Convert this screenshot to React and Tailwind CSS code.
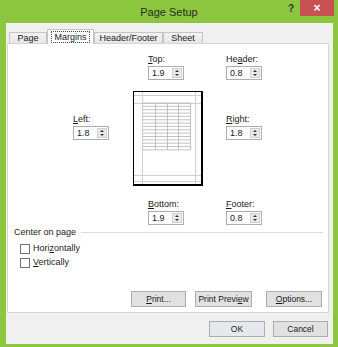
import { useState } from "react";

function Label({ text, ul }) {
  // ul = index of the access-key letter
  return (
    <div className="h-[11px] leading-[11px] whitespace-nowrap">
      {text.slice(0, ul)}
      <u>{text[ul]}</u>
      {text.slice(ul + 1)}
    </div>
  );
}

function SpinField({ label, ul, value, className = "" }) {
  return (
    <div className={"flex flex-col gap-[1px] w-[36px] " + className}>
      <Label text={label} ul={ul} />
      <div className="h-[14px] flex border border-[#abadb3] bg-white">
        <div className="flex-1 pl-[3px] leading-[12px]">{value}</div>
        <div className="w-[10px] m-[1px] bg-[#e9e9e9] border border-[#d0d0d0] flex items-center justify-center">
          <svg width="6" height="8" viewBox="0 0 6 8">
            <path d="M1 3 L3 1 L5 3 Z" fill="#333" />
            <path d="M1 5 L3 7 L5 5 Z" fill="#333" />
          </svg>
        </div>
      </div>
    </div>
  );
}

function PagePreview() {
  const rows = [];
  for (let i = 0; i <= 14; i++) rows.push(11 + i * 3.35);
  return (
    <div className="w-[70px] h-[95px] border border-black border-r-2 border-b-2 bg-white">
      <svg width="67" height="92" viewBox="0 0 67 92">
        <g stroke="#cfcfcf" strokeWidth="1">
          <line x1="8.5" y1="0" x2="8.5" y2="92" />
          <line x1="61.5" y1="0" x2="61.5" y2="92" />
          <line x1="0" y1="3.5" x2="67" y2="3.5" />
          <line x1="0" y1="11.5" x2="67" y2="11.5" />
          <line x1="0" y1="83.5" x2="67" y2="83.5" />
          <line x1="0" y1="89.5" x2="67" y2="89.5" />
        </g>
        <g stroke="#b4b4b4" strokeWidth="0.8">
          {rows.map((y, i) => (
            <line key={i} x1="8.5" y1={y} x2="56.5" y2={y} />
          ))}
          <line x1="21.5" y1="11" x2="21.5" y2="58" />
          <line x1="33.5" y1="11" x2="33.5" y2="58" />
          <line x1="44.5" y1="11" x2="44.5" y2="58" />
          <line x1="56.5" y1="11" x2="56.5" y2="58" />
        </g>
      </svg>
    </div>
  );
}

function Check({ text, ul, className = "" }) {
  const [on, setOn] = useState(false);
  return (
    <div
      className={"flex items-center h-[12px] gap-[3px] ml-[12px] " + className}
      onClick={() => setOn(!on)}
    >
      <div className="w-[10px] h-[10px] border border-[#707070] bg-white flex items-center justify-center text-[8px] leading-none">
        {on ? "✓" : ""}
      </div>
      <span>
        {text.slice(0, ul)}
        <u>{text[ul]}</u>
        {text.slice(ul + 1)}
      </span>
    </div>
  );
}

function Btn({ text, ul, className = "" }) {
  return (
    <button
      className={
        "h-[16px] bg-[#e1e1e1] border border-[#adadad] text-[8.5px] leading-[14px] text-center whitespace-nowrap " +
        className
      }
    >
      {ul === undefined ? (
        text
      ) : (
        <>
          {text.slice(0, ul)}
          <u>{text[ul]}</u>
          {text.slice(ul + 1)}
        </>
      )}
    </button>
  );
}

export default function App() {
  const [tab, setTab] = useState("Margins");
  const tabs = [
    { name: "Page", w: "w-[38px]" },
    { name: "Margins", w: "w-[47px]" },
    { name: "Header/Footer", w: "w-[69px]" },
    { name: "Sheet", w: "w-[40px]" },
  ];

  return (
    <div className="w-[338px] h-[347px] bg-[#8cc63f] flex flex-col overflow-hidden font-['Liberation_Sans',Arial,sans-serif] text-[9px] text-[#1a1a1a]">
      {/* title bar */}
      <div className="h-[23px] flex">
        <div className="w-[56px]" />
        <div className="flex-1 text-center text-[11px] leading-[24px] text-[#2a2a2a]">
          Page Setup
        </div>
        <div className="w-[52px] flex items-start">
          <div className="w-[18px] h-[16px] flex items-center justify-center text-[10px] font-bold text-[#333]">
            ?
          </div>
          <div className="w-[34px] h-[16px] bg-[#c75050] text-white flex items-center justify-center text-[12px] font-bold">
            ×
          </div>
        </div>
        <div className="w-[4px]" />
      </div>

      {/* dialog body */}
      <div className="flex-1 ml-[6px] mr-[5px] mb-[3px] bg-[#f0f0f0] flex flex-col pt-[6px]">
        <div className="flex items-end h-[14px] pl-[3px]">
          {tabs.map((t) =>
            t.name === tab ? (
              <div
                key={t.name}
                className={
                  t.w +
                  " h-[15px] -mb-px relative z-10 bg-white border border-b-0 border-[#c4c4c4] flex items-center justify-center"
                }
              >
                <span className="border border-dotted border-[#444] px-[2px] leading-[10px]">
                  {t.name}
                </span>
              </div>
            ) : (
              <div
                key={t.name}
                onClick={() => setTab(t.name)}
                className={
                  t.w +
                  " h-[11px] bg-gradient-to-b from-[#f3f3f3] to-[#e6e6e6] border border-b-0 border-[#c4c4c4] flex items-center justify-center leading-[10px]"
                }
              >
                {t.name}
              </div>
            )
          )}
        </div>

        <div className="ml-[1px] mr-[4px] h-[270px] border border-[#d5d5d5] bg-white flex flex-col">
          <div className="grid grid-cols-[36px_24px_70px_23px_36px] pl-[65px] pt-[10px]">
            <SpinField label="Top:" ul={0} value="1.9" className="col-start-3 row-start-1 ml-[15px]" />
            <SpinField label="Header:" ul={2} value="0.8" className="col-start-5 row-start-1" />

            <SpinField label="Left:" ul={0} value="1.8" className="col-start-1 row-start-2 mt-[34px]" />
            <div className="col-start-3 row-start-2 mt-[11px]">
              <PagePreview />
            </div>
            <SpinField label="Right:" ul={0} value="1.8" className="col-start-5 row-start-2 mt-[34px]" />

            <SpinField label="Bottom:" ul={0} value="1.9" className="col-start-3 row-start-3 ml-[15px] mt-[13px]" />
            <SpinField label="Footer:" ul={0} value="0.8" className="col-start-5 row-start-3 mt-[13px]" />
          </div>

          <div className="flex items-center h-[11px] mt-[2px] ml-[6px] mr-[5px]">
            <span className="leading-[11px] whitespace-nowrap">Center on page</span>
            <div className="flex-1 ml-[5px] border-t border-[#dcdcdc]" />
          </div>
          <Check text="Horizontally" ul={4} className="mt-[5px]" />
          <Check text="Vertically" ul={0} className="mt-[2px]" />

          <div className="mt-auto mb-[5px] pr-[6px] flex justify-end">
            <Btn text="Print..." ul={0} className="w-[55px]" />
            <Btn text="Print Preview" ul={11} className="w-[57px] ml-[9px]" />
            <Btn text="Options..." ul={0} className="w-[56px] ml-[14px]" />
          </div>
        </div>

        <div className="mt-[8px] pr-[5px] flex justify-end">
          <Btn text="OK" className="w-[56px] border-[#3c7fb1] bg-[#e5e9ee]" />
          <Btn text="Cancel" className="w-[55px] ml-[8px]" />
        </div>
      </div>
    </div>
  );
}
